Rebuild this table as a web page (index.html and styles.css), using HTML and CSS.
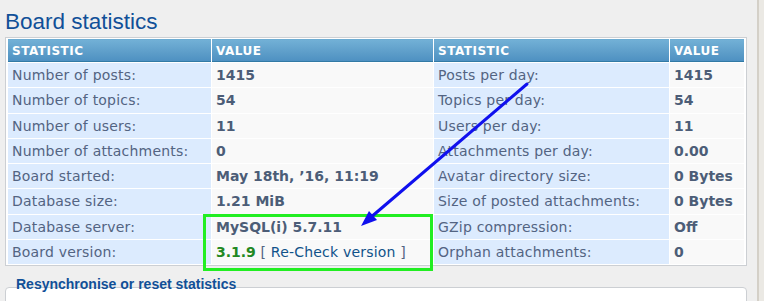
FILE: index.html
```html
<!DOCTYPE html>
<html>
<head>
<meta charset="utf-8">
<link rel="stylesheet" href="styles.css">
</head>
<body>
<div class="page">
  <div class="main">
    <h1 class="title">Board statistics</h1>
    <table class="stats">
      <colgroup>
        <col class="c1"><col class="c2"><col class="c3"><col class="c4">
      </colgroup>
      <thead>
        <tr><th>Statistic</th><th>Value</th><th>Statistic</th><th>Value</th></tr>
      </thead>
      <tbody>
        <tr><td class="lbl">Number of posts:</td><td class="val"><strong>1415</strong></td><td class="lbl">Posts per day:</td><td class="val"><strong>1415</strong></td></tr>
        <tr><td class="lbl">Number of topics:</td><td class="val"><strong>54</strong></td><td class="lbl">Topics per day:</td><td class="val"><strong>54</strong></td></tr>
        <tr><td class="lbl">Number of users:</td><td class="val"><strong>11</strong></td><td class="lbl">Users per day:</td><td class="val"><strong>11</strong></td></tr>
        <tr><td class="lbl">Number of attachments:</td><td class="val"><strong>0</strong></td><td class="lbl">Attachments per day:</td><td class="val"><strong>0.00</strong></td></tr>
        <tr><td class="lbl">Board started:</td><td class="val"><strong>May 18th, ’16, 11:19</strong></td><td class="lbl">Avatar directory size:</td><td class="val"><strong>0 Bytes</strong></td></tr>
        <tr><td class="lbl">Database size:</td><td class="val"><strong>1.21 MiB</strong></td><td class="lbl">Size of posted attachments:</td><td class="val"><strong>0 Bytes</strong></td></tr>
        <tr><td class="lbl">Database server:</td><td class="val"><strong>MySQL(i) 5.7.11</strong></td><td class="lbl">GZip compression:</td><td class="val"><strong>Off</strong></td></tr>
        <tr><td class="lbl">Board version:</td><td class="val"><strong class="ver">3.1.9</strong> [ <a class="recheck" href="#">Re-Check version</a> ]</td><td class="lbl">Orphan attachments:</td><td class="val"><strong>0</strong></td></tr>
      </tbody>
    </table>
    <div class="resync-title">Resynchronise or reset statistics</div>
    <div class="resync-box"></div>
  </div>
  <div class="edge"></div>
  <svg class="annot" width="764" height="301" viewBox="0 0 764 301">
    <rect x="204.5" y="215.5" width="227" height="54" fill="none" stroke="#22ee22" stroke-width="3"/>
    <line x1="527" y1="84" x2="370" y2="218" stroke="#1010ee" stroke-width="3" stroke-linecap="round"/>
    <polygon points="361,226 377,220 369,211" fill="#1010ee"/>
  </svg>
</div>
</body>
</html>
```
FILE: styles.css
```css
html, body {
  margin: 0;
  padding: 0;
}
body {
  background: #efefef;
  font-family: "DejaVu Sans", Verdana, sans-serif;
  overflow: hidden;
}
.page {
  position: relative;
  display: flex;
  width: 764px;
  height: 301px;
  overflow: hidden;
}
.main {
  width: 757px;
  flex: none;
}
.edge {
  flex: 1;
  border-left: 2px solid #d4d0c8;
  background: #ebe9e4;
}
.title {
  margin: 0;
  padding: 10px 0 0 5px;
  font-family: "Liberation Sans", Tahoma, sans-serif;
  font-weight: normal;
  font-size: 22.5px;
  line-height: 24px;
  color: #115098;
}
.stats {
  margin: 3px 0 0 5px;
  width: 742px;
  table-layout: fixed;
  border: 1px solid #cccfd3;
  background: #ffffff;
  border-collapse: separate;
  border-spacing: 1px;
  padding: 0 1px 0 1px;
}
.c1 { width: 203px; }
.c2 { width: 221px; }
.c3 { width: 235px; }
.c4 { width: 74px; }
.stats th {
  height: 21px;
  padding: 0 4px;
  text-align: left;
  text-transform: uppercase;
  font-size: 12px;
  font-weight: bold;
  color: #ffffff;
  background: linear-gradient(#72b0d6, #5d9dc9 60%, #4e91c2);
  border-top: 1px solid #6dacd2;
  border-bottom: 1px solid #327aa5;
  letter-spacing: 0.5px;
}
.stats td {
  padding: 4px 4px;
  font-size: 14px;
  line-height: 16.25px;
  letter-spacing: 0.2px;
  color: #536482;
  white-space: nowrap;
}
.lbl {
  background: #dcebfe;
}
.val {
  background: #f9f9f9;
}
.val strong {
  font-weight: bold;
  letter-spacing: 0;
  color: #4c5d77;
}
.val strong.ver {
  color: #228822;
}
.recheck {
  color: #105289;
  text-decoration: none;
}
.resync-title {
  margin: 11px 0 0 16px;
  font-family: "Liberation Sans", Tahoma, sans-serif;
  font-weight: bold;
  font-size: 14px;
  line-height: 14px;
  color: #115098;
}
.resync-box {
  margin: -4px 0 0 5px;
  width: 740px;
  height: 40px;
  background: #ffffff;
  border: 1px solid #cccfd3;
  border-radius: 4px;
}
.annot {
  position: absolute;
  left: 0;
  top: 0;
  pointer-events: none;
}
```
